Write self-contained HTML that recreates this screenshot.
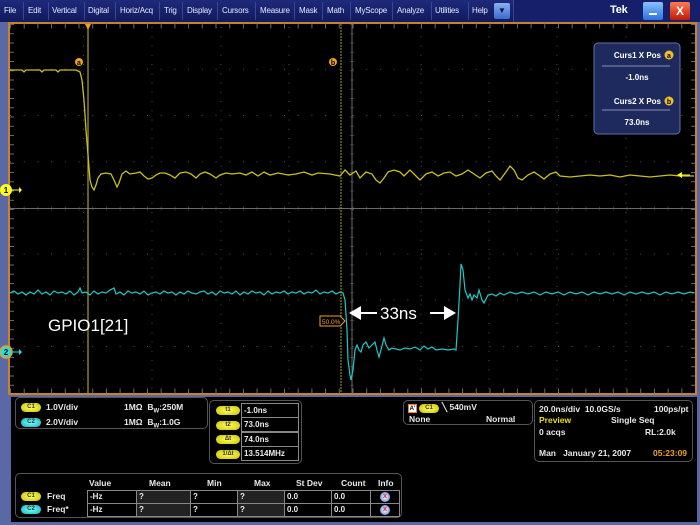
<!DOCTYPE html>
<html><head><meta charset="utf-8"><style>
*{margin:0;padding:0;box-sizing:border-box}
body{width:700px;height:525px;background:#5a68a6;font-family:"Liberation Sans",sans-serif;position:relative;overflow:hidden;color:#fff}
#menu{position:absolute;left:0;top:0;width:700px;height:22px;background:linear-gradient(#1e2a7a,#111a5c);}
#menu span{position:absolute;top:6px;font-size:8px;color:#e8e8ff;letter-spacing:-0.2px}
.sep{position:absolute;top:2px;width:1px;height:18px;background:#3a4790}
#bot{position:absolute;left:11px;top:397px;width:686px;height:125px;background:#000}
.box{position:absolute;border:1.5px solid #555;border-radius:5px}
.t{position:absolute;font-size:8.5px;font-weight:bold;color:#e8e8e8;white-space:nowrap}
.pill{position:absolute;width:20px;height:9px;border-radius:5px;font-size:6px;font-weight:bold;text-align:center;line-height:9px;color:#333}
.y{background:radial-gradient(#ffff60,#c8c000)}
.c{background:radial-gradient(#80ffff,#10b0b8)}
.cell{position:absolute;border:1px solid #888;font-size:8px;font-weight:bold;padding-left:2px;line-height:16px;color:#eee}
</style></head><body>
<div id="menu">
<span style="left:4px">File</span><div class="sep" style="left:23px"></div>
<span style="left:28px">Edit</span><div class="sep" style="left:48px"></div>
<span style="left:52px">Vertical</span><div class="sep" style="left:84px"></div>
<span style="left:88px">Digital</span><div class="sep" style="left:115px"></div>
<span style="left:120px">Horiz/Acq</span><div class="sep" style="left:159px"></div>
<span style="left:164px">Trig</span><div class="sep" style="left:182px"></div>
<span style="left:187px">Display</span><div class="sep" style="left:217px"></div>
<span style="left:222px">Cursors</span><div class="sep" style="left:255px"></div>
<span style="left:260px">Measure</span><div class="sep" style="left:294px"></div>
<span style="left:299px">Mask</span><div class="sep" style="left:322px"></div>
<span style="left:327px">Math</span><div class="sep" style="left:350px"></div>
<span style="left:355px">MyScope</span><div class="sep" style="left:392px"></div>
<span style="left:397px">Analyze</span><div class="sep" style="left:431px"></div>
<span style="left:435px">Utilities</span><div class="sep" style="left:468px"></div>
<span style="left:472px">Help</span>
<div style="position:absolute;left:494px;top:3px;width:16px;height:16px;background:linear-gradient(#8ab0f0,#3a6ad0);border-radius:2px;color:#113;font-size:8px;text-align:center;line-height:16px">▼</div>
<div style="position:absolute;left:513px;top:0;width:187px;height:22px;background:#16206a;border-left:1px solid #3a4790"></div>
<span style="left:610px;top:4px;font-size:11px;font-weight:bold;color:#fff">Tek</span>
<div style="position:absolute;left:643px;top:2px;width:20px;height:18px;background:linear-gradient(#8ac0ff,#2a70e0);border-radius:2px"><div style="position:absolute;left:6px;top:11px;width:8px;height:2px;background:#fff"></div></div>
<div style="position:absolute;left:670px;top:2px;width:20px;height:18px;background:linear-gradient(#ff7a50,#c01808);border-radius:2px;color:#fff;font-size:12px;font-weight:bold;text-align:center;line-height:18px">X</div>
</div>
<svg style="position:absolute;left:0;top:22px" width="700" height="375" viewBox="0 22 700 375">
<rect x="9" y="23" width="687" height="371" fill="#000" stroke="#c8822a" stroke-width="2"/>
<g stroke="#555" stroke-width="1" stroke-dasharray="1 8.25">
<line x1="83.6" y1="27" x2="83.6" y2="393"/><line x1="152" y1="27" x2="152" y2="393"/><line x1="221" y1="27" x2="221" y2="393"/><line x1="289" y1="27" x2="289" y2="393"/><line x1="421" y1="27" x2="421" y2="393"/><line x1="489" y1="27" x2="489" y2="393"/><line x1="557" y1="27" x2="557" y2="393"/><line x1="626" y1="27" x2="626" y2="393"/>
<line x1="10" y1="69.2" x2="695" y2="69.2" stroke-dasharray="1 12.7"/><line x1="10" y1="115.5" x2="695" y2="115.5" stroke-dasharray="1 12.7"/><line x1="10" y1="161.7" x2="695" y2="161.7" stroke-dasharray="1 12.7"/><line x1="10" y1="254" x2="695" y2="254" stroke-dasharray="1 12.7"/><line x1="10" y1="300" x2="695" y2="300" stroke-dasharray="1 12.7"/><line x1="10" y1="346.5" x2="695" y2="346.5" stroke-dasharray="1 12.7"/>
</g>
<g stroke="#6a6a6a" stroke-width="1">
<line x1="10" y1="208.5" x2="695" y2="208.5"/><line x1="352" y1="24" x2="352" y2="393"/>
<line x1="10" y1="208.5" x2="695" y2="208.5" stroke-dasharray="1 12.7" stroke-width="4" stroke-opacity=".5"/>
<line x1="352" y1="24" x2="352" y2="393" stroke-dasharray="1 8.25" stroke-width="4" stroke-opacity=".5"/>
<line x1="10" y1="26" x2="695" y2="26" stroke-dasharray="1 12.7" stroke-width="5"/>
<line x1="10" y1="391" x2="695" y2="391" stroke-dasharray="1 12.7" stroke-width="5"/>
<line x1="12" y1="24" x2="12" y2="393" stroke-dasharray="1 8.25" stroke-width="4"/>
<line x1="693" y1="24" x2="693" y2="393" stroke-dasharray="1 8.25" stroke-width="4"/>
</g>
<line x1="88" y1="24" x2="88" y2="393" stroke="#a8a020" stroke-width="1.2"/>
<line x1="341" y1="24" x2="341" y2="393" stroke="#a8a020" stroke-width="1" stroke-dasharray="2 1"/>
<polygon points="85,24 91,24 88,30" fill="#f0a020"/>
<circle cx="79" cy="62" r="4" fill="#f0a020"/><text x="79" y="65" font-size="7" text-anchor="middle" fill="#000" font-weight="bold">a</text>
<circle cx="333" cy="62" r="4" fill="#f0a020"/><text x="333" y="65" font-size="7" text-anchor="middle" fill="#000" font-weight="bold">b</text>
<polyline fill="none" stroke="#c8c020" stroke-width="1.3" points="10,70 22,70 24,72 26,70 40,70 42,72 44,70 56,70 58,72 60,70 72,70 76,70 80,72 82,80 84,100 86,130 88,155 90,180 92,187 94,190 96,185 98,178 101,174 106,173 111,174 114,180 117,187 119,183 122,174 126,171 130,174 136,173 140,172 144,176 148,179 152,178 156,175 160,173 165,173 170,175 175,178 180,173 186,172 191,174 196,178 200,174 205,172 210,174 216,178 220,175 226,173 232,174 240,173 246,175 252,172 258,176 264,172 270,175 278,173 288,175 296,174 304,172 312,175 318,173 330,174 340,176 345,170 350,175 356,171 360,178 366,172 372,174 376,180 380,183 384,178 388,172 394,170 400,172 404,176 410,170 416,176 420,180 426,174 432,172 438,176 444,173 450,172 456,176 462,174 468,170 474,174 480,178 486,173 492,171 496,176 500,180 506,172 510,166 514,170 518,178 522,180 528,175 534,172 540,176 544,179 550,174 556,172 560,176 570,177 580,176 590,175 600,176 610,175 620,177 630,175 640,176 650,177 660,176 670,175 680,176 694,176"/>
<polyline fill="none" stroke="#20c8c8" stroke-width="1.2" points="10,293 14,291 18,294 22,292 26,295 30,292 34,294 38,290 42,294 46,292 50,295 54,291 58,293 62,292 66,294 70,291 74,295 78,292 80,288 82,293 86,292 90,295 94,291 98,294 102,292 106,293 110,290 114,288 116,294 120,292 124,295 128,291 132,293 136,292 140,294 144,291 148,295 152,293 156,292 160,294 164,291 168,293 172,292 176,295 180,292 184,294 188,291 192,293 196,294 200,292 204,291 208,294 212,292 216,295 220,291 224,293 228,292 232,294 236,291 240,295 244,292 248,294 252,291 256,293 260,292 264,295 268,291 272,294 276,292 280,293 284,291 288,294 292,292 296,293 300,291 304,294 308,292 312,293 316,290 320,294 324,292 328,293 332,291 336,294 340,292 343,293 345,300 347,330 348,360 350,375 351,380 353,370 355,350 357,345 359,350 361,352 363,345 366,342 369,348 372,345 375,342 377,350 379,357 382,346 384,338 386,345 389,350 392,348 396,349 400,350 405,348 410,349 415,347 420,350 424,346 428,349 432,347 436,350 442,349 448,350 454,349 456,350 458,320 460,285 461,264 463,270 465,290 468,298 470,294 472,300 474,295 477,298 479,290 482,300 484,303 488,295 492,294 496,296 500,293 504,295 510,292 516,294 522,292 528,294 534,292 540,295 546,292 552,294 558,292 564,295 570,292 576,294 582,292 588,295 594,292 600,294 606,292 612,294 618,292 624,295 630,292 636,294 642,292 648,294 654,292 660,295 666,292 672,294 678,292 684,294 690,292 694,293"/>
<path d="M320,316 h20 l5,5 l-5,5 h-20z" fill="#000" stroke="#f0a020"/>
<text x="322" y="324" font-size="6.5" fill="#f0a020">50.0%</text>
<text x="48" y="331" font-size="17" fill="#fff" font-family="Liberation Sans">GPIO1[21]</text>
<text x="380" y="319" font-size="17" fill="#fff" font-family="Liberation Sans">33ns</text>
<line x1="357" y1="313" x2="377" y2="313" stroke="#fff" stroke-width="2"/><polygon points="349,313 361,306 361,320" fill="#fff"/>
<line x1="430" y1="313" x2="446" y2="313" stroke="#fff" stroke-width="2"/><polygon points="456,313 444,306 444,320" fill="#fff"/>
<circle cx="6" cy="190" r="6" fill="#ffff20"/><text x="6" y="193" font-size="8" text-anchor="middle" fill="#000" font-weight="bold">1</text>
<line x1="12" y1="190" x2="19" y2="190" stroke="#ffff20"/><polygon points="19,187 19,193 22,190" fill="#ffff20"/>
<circle cx="6" cy="352" r="6" fill="#20e0e0" stroke="#f0a020" stroke-width="1.5"/><text x="6" y="355" font-size="8" text-anchor="middle" fill="#000" font-weight="bold">2</text>
<line x1="12" y1="352" x2="19" y2="352" stroke="#20e0e0"/><polygon points="19,349 19,355 22,352" fill="#20e0e0"/>
<polygon points="682,172 682,178 677,175" fill="#ffff20"/><line x1="682" y1="175" x2="690" y2="175" stroke="#ffff20"/>
<rect x="594" y="43" width="86" height="91" rx="4" fill="#1e2a5e" stroke="#6670a0"/>
<text x="661" y="58" font-size="8" font-weight="bold" fill="#fff" text-anchor="end">Curs1 X Pos</text>
<circle cx="669" cy="55" r="4.5" fill="#f0c020"/><text x="669" y="58" font-size="7" text-anchor="middle" fill="#000" font-weight="bold">a</text>
<line x1="602" y1="66" x2="670" y2="66" stroke="#8890b0"/>
<text x="637" y="80" font-size="8" font-weight="bold" fill="#fff" text-anchor="middle">-1.0ns</text>
<text x="661" y="104" font-size="8" font-weight="bold" fill="#fff" text-anchor="end">Curs2 X Pos</text>
<circle cx="669" cy="101" r="4.5" fill="#f0c020"/><text x="669" y="104" font-size="7" text-anchor="middle" fill="#000" font-weight="bold">b</text>
<line x1="602" y1="110" x2="670" y2="110" stroke="#8890b0"/>
<text x="637" y="125" font-size="8" font-weight="bold" fill="#fff" text-anchor="middle">73.0ns</text>
</svg>
<div id="bot">
<div class="box" style="left:4px;top:0;width:193px;height:32px"></div>
<div class="pill y" style="left:10px;top:6px">C1</div><div class="t" style="left:35px;top:5px">1.0V/div</div><div class="t" style="left:113px;top:5px">1MΩ &nbsp;B<sub style="font-size:6px">W</sub>:250M</div>
<div class="pill c" style="left:10px;top:21px">C2</div><div class="t" style="left:35px;top:20px">2.0V/div</div><div class="t" style="left:113px;top:20px">1MΩ &nbsp;B<sub style="font-size:6px">W</sub>:1.0G</div>
<div class="box" style="left:198px;top:3px;width:93px;height:64px"></div>
<div class="pill y" style="left:205px;top:9px;width:24px">t1</div><div class="pill y" style="left:205px;top:24px;width:24px">t2</div><div class="pill y" style="left:205px;top:38px;width:24px">Δt</div><div class="pill y" style="left:205px;top:53px;width:24px">1/Δt</div>
<div class="cell" style="left:230px;top:6px;width:58px;height:15px;line-height:13px">-1.0ns</div>
<div class="cell" style="left:230px;top:20px;width:58px;height:15px;line-height:13px">73.0ns</div>
<div class="cell" style="left:230px;top:35px;width:58px;height:15px;line-height:13px">74.0ns</div>
<div class="cell" style="left:230px;top:49px;width:58px;height:15px;line-height:13px">13.514MHz</div>
<div class="box" style="left:392px;top:3px;width:130px;height:25px"></div>
<div style="position:absolute;left:397px;top:7px;width:9px;height:9px;background:#fff;border:1px solid #f08020;font-size:6px;color:#000;text-align:center;line-height:8px;font-weight:bold">A'</div>
<div class="pill y" style="left:408px;top:7px">C1</div><div class="t" style="left:431px;top:5px">╲ 540mV</div>
<div class="t" style="left:398px;top:17px">None</div><div class="t" style="left:475px;top:17px">Normal</div>
<div class="box" style="left:523px;top:3px;width:159px;height:62px"></div>
<div class="t" style="left:528px;top:7px">20.0ns/div &nbsp;10.0GS/s</div><div class="t" style="left:643px;top:7px">100ps/pt</div>
<div class="t" style="left:528px;top:18px;color:#e8e000">Preview</div><div class="t" style="left:600px;top:18px">Single Seq</div>
<div class="t" style="left:528px;top:30px">0 acqs</div><div class="t" style="left:634px;top:30px">RL:2.0k</div>
<div class="t" style="left:528px;top:51px">Man &nbsp;&nbsp;January 21, 2007</div><div class="t" style="left:642px;top:51px;color:#f0a020">05:23:09</div>
<div class="box" style="left:4px;top:76px;width:387px;height:45px"></div>
<div class="t" style="left:78px;top:81px">Value</div><div class="t" style="left:138px;top:81px">Mean</div><div class="t" style="left:196px;top:81px">Min</div><div class="t" style="left:243px;top:81px">Max</div><div class="t" style="left:285px;top:81px">St Dev</div><div class="t" style="left:330px;top:81px">Count</div><div class="t" style="left:367px;top:81px">Info</div>
<div class="pill y" style="left:10px;top:95px">C1</div><div class="t" style="left:36px;top:94px">Freq</div>
<div class="pill c" style="left:10px;top:108px">C2</div><div class="t" style="left:36px;top:107px">Freq*</div>
<div class="cell" style="left:76px;top:93px;width:50px;height:14px;line-height:12px">-Hz</div><div class="cell" style="left:125px;top:93px;width:55px;height:14px;line-height:12px;background:#222">?</div><div class="cell" style="left:179px;top:93px;width:48px;height:14px;line-height:12px">?</div><div class="cell" style="left:226px;top:93px;width:48px;height:14px;line-height:12px;background:#222">?</div><div class="cell" style="left:273px;top:93px;width:48px;height:14px;line-height:12px">0.0</div><div class="cell" style="left:320px;top:93px;width:40px;height:14px;line-height:12px">0.0</div><div class="cell" style="left:359px;top:93px;width:30px;height:14px"></div>
<div class="cell" style="left:76px;top:106px;width:50px;height:14px;line-height:12px">-Hz</div><div class="cell" style="left:125px;top:106px;width:55px;height:14px;line-height:12px;background:#222">?</div><div class="cell" style="left:179px;top:106px;width:48px;height:14px;line-height:12px">?</div><div class="cell" style="left:226px;top:106px;width:48px;height:14px;line-height:12px;background:#222">?</div><div class="cell" style="left:273px;top:106px;width:48px;height:14px;line-height:12px">0.0</div><div class="cell" style="left:320px;top:106px;width:40px;height:14px;line-height:12px">0.0</div><div class="cell" style="left:359px;top:106px;width:30px;height:14px"></div>
<div style="position:absolute;left:369px;top:95px;width:10px;height:10px;border-radius:50%;background:radial-gradient(#fff,#4a70d0);color:#e02020;font-size:7px;text-align:center;line-height:10px;font-weight:bold">x</div>
<div style="position:absolute;left:369px;top:108px;width:10px;height:10px;border-radius:50%;background:radial-gradient(#fff,#4a70d0);color:#e02020;font-size:7px;text-align:center;line-height:10px;font-weight:bold">x</div>
</div>
</body></html>
